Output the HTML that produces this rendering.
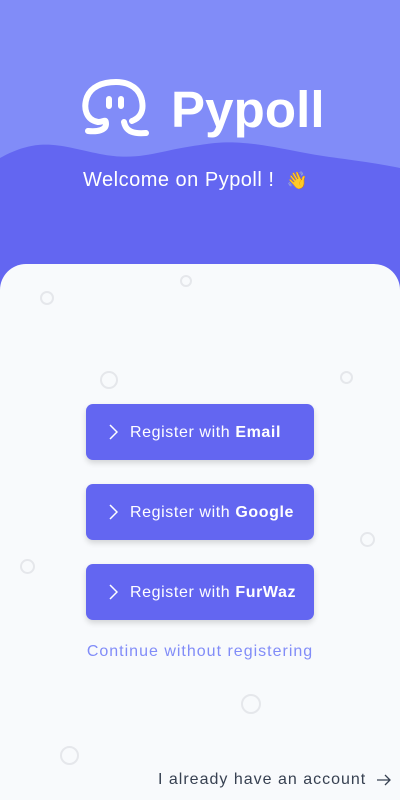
<!DOCTYPE html>
<html><head><meta charset="utf-8"><style>
html,body{margin:0;width:400px;height:800px;overflow:hidden}
body{position:relative;background:#6366f1;font-family:"Liberation Sans",sans-serif}
.top{position:absolute;left:0;top:0;width:400px;height:270px}
.card{position:absolute;left:0;top:264px;width:400px;height:536px;background:#f8fafc;border-radius:26px 26px 0 0}
.btn{position:absolute;left:86px;width:228px;height:56px;background:#6366f1;border-radius:7px;box-shadow:0 3px 6px rgba(0,0,0,.15);color:#fff;font-size:16px;letter-spacing:0.6px;line-height:58px;box-sizing:border-box;padding-left:44px;white-space:nowrap}
.btn svg{position:absolute;left:22px;top:20px}
.c{position:absolute;border:2px solid #e5e7eb;border-radius:50%;box-sizing:border-box}
</style></head><body>
<svg class="top" viewBox="0 0 400 270"><rect width="400" height="270" fill="#6366f1"/><path d="M0 0H400V168C360 160 330 158 300 152C250 142 230 140 200 145C160 150 140 162 100 154C60 146 40 136 0 158Z" fill="#818cf8"/></svg>
<svg style="position:absolute;left:80px;top:78px" width="72" height="62" viewBox="0 0 72 62" fill="none" stroke="#fff" stroke-width="6" stroke-linecap="round">
<path d="M18 44C6 42 3 30 7 19C11 9 22 4 36 4C50 4 60 11 62 23C64 33 60 40 52 43"/>
<path d="M18 44C24 44 26 40 26 46C26 52 18 54 8 53"/>
<path d="M44 44C46 54 54 56 66 55"/>
<path d="M29 21V28M41 21V28"/>
</svg>
<div style="position:absolute;left:171px;top:80px;color:#fff;font-weight:bold;font-size:51px;letter-spacing:0.1px">Pypoll</div>
<div style="position:absolute;left:83px;top:169px;color:#fff;font-size:20px;letter-spacing:0.5px">Welcome on Pypoll ! &nbsp;<span style="font-size:17px">👋</span></div>
<div class="card"></div>
<div class="c" style="left:40px;top:291px;width:14px;height:14px"></div>
<div class="c" style="left:180px;top:275px;width:12px;height:12px"></div>
<div class="c" style="left:100px;top:371px;width:18px;height:18px"></div>
<div class="c" style="left:340px;top:371px;width:13px;height:13px"></div>
<div class="c" style="left:360px;top:532px;width:15px;height:15px"></div>
<div class="c" style="left:20px;top:559px;width:15px;height:15px"></div>
<div class="c" style="left:241px;top:694px;width:20px;height:20px"></div>
<div class="c" style="left:60px;top:746px;width:19px;height:19px"></div>
<div class="btn" style="top:404px"><svg width="10" height="16" viewBox="0 0 10 16"><path d="M2 1L9 8L2 15" stroke="#fff" stroke-width="1.5" fill="none"/></svg>Register with <b>Email</b></div>
<div class="btn" style="top:484px"><svg width="10" height="16" viewBox="0 0 10 16"><path d="M2 1L9 8L2 15" stroke="#fff" stroke-width="1.5" fill="none"/></svg>Register with <b>Google</b></div>
<div class="btn" style="top:564px"><svg width="10" height="16" viewBox="0 0 10 16"><path d="M2 1L9 8L2 15" stroke="#fff" stroke-width="1.5" fill="none"/></svg>Register with <b>FurWaz</b></div>
<div style="position:absolute;left:0;width:400px;top:643px;text-align:center;color:#818cf8;font-size:16px;letter-spacing:1px">Continue without registering</div>
<div style="position:absolute;left:158px;top:771px;color:#374151;font-size:16px;letter-spacing:1px">I already have an account</div>
<svg style="position:absolute;left:376px;top:773px" width="16" height="14" viewBox="0 0 16 14"><path d="M1 7H14M9 2L14 7L9 12" stroke="#374151" stroke-width="1.3" fill="none"/></svg>
</body></html>
